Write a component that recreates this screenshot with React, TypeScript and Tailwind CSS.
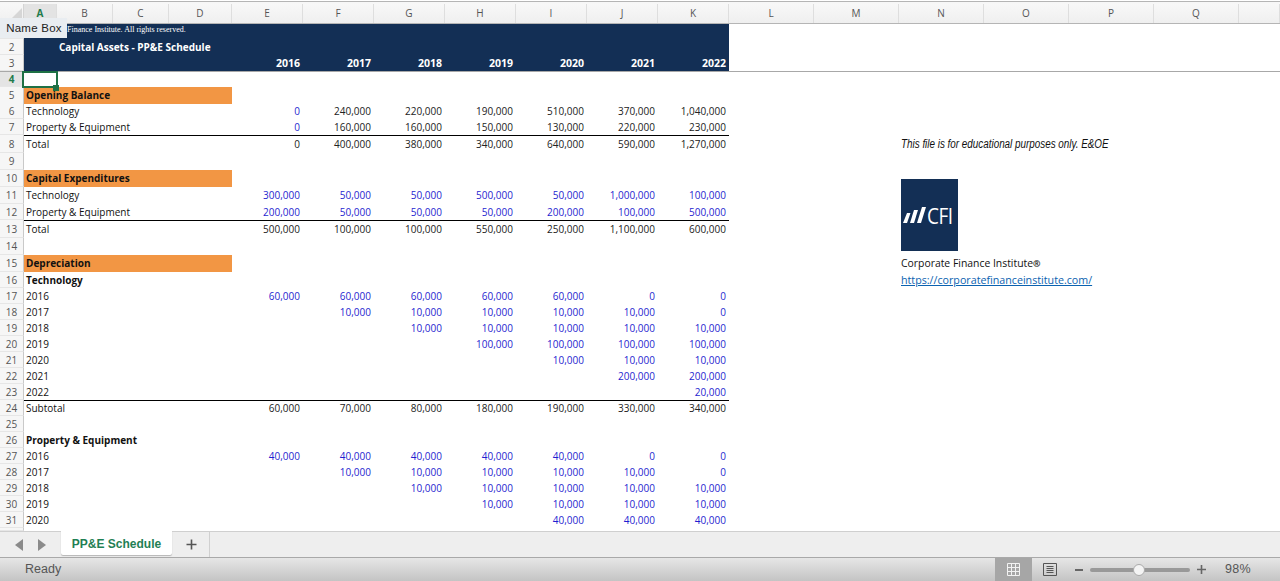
import React from "react";

const COLS = ["A", "B", "C", "D", "E", "F", "G", "H", "I", "J", "K", "L", "M", "N", "O", "P", "Q", ""];
const GRID = "grid grid-cols-[24px_33px_56px_56px_63px_repeat(7,71px)_repeat(6,85px)_41px]";

type Row = {
  n: number;
  h?: string;
  label?: string;
  bold?: boolean;
  orange?: boolean;
  line?: boolean;
  up?: boolean;
  blue?: boolean | number;
  vals?: string[];
};

const T = "10,000";
const rows: Row[] = [
  { n: 4, h: "h-[15px]" },
  { n: 5, label: "Opening Balance", bold: true, orange: true, up: true },
  { n: 6, label: "Technology", vals: ["0", "240,000", "220,000", "190,000", "510,000", "370,000", "1,040,000"], blue: 1 },
  { n: 7, label: "Property & Equipment", vals: ["0", "160,000", "160,000", "150,000", "130,000", "220,000", "230,000"], blue: 1 },
  { n: 8, h: "h-[18px]", label: "Total", line: true, up: true, vals: ["0", "400,000", "380,000", "340,000", "640,000", "590,000", "1,270,000"] },
  { n: 9, h: "h-[17px]" },
  { n: 10, h: "h-[17px]", label: "Capital Expenditures", bold: true, orange: true, up: true },
  { n: 11, h: "h-[17px]", label: "Technology", blue: true, up: true, vals: ["300,000", "50,000", "50,000", "500,000", "50,000", "1,000,000", "100,000"] },
  { n: 12, label: "Property & Equipment", blue: true, vals: ["200,000", "50,000", "50,000", "50,000", "200,000", "100,000", "500,000"] },
  { n: 13, h: "h-[18px]", label: "Total", line: true, up: true, vals: ["500,000", "100,000", "100,000", "550,000", "250,000", "1,100,000", "600,000"] },
  { n: 14, h: "h-[17px]" },
  { n: 15, h: "h-[17px]", label: "Depreciation", bold: true, orange: true, up: true },
  { n: 16, label: "Technology", bold: true },
  { n: 17, label: "2016", blue: true, vals: ["60,000", "60,000", "60,000", "60,000", "60,000", "0", "0"] },
  { n: 18, label: "2017", blue: true, vals: ["", T, T, T, T, T, "0"] },
  { n: 19, label: "2018", blue: true, vals: ["", "", T, T, T, T, T] },
  { n: 20, label: "2019", blue: true, vals: ["", "", "", "100,000", "100,000", "100,000", "100,000"] },
  { n: 21, label: "2020", blue: true, vals: ["", "", "", "", T, T, T] },
  { n: 22, label: "2021", blue: true, vals: ["", "", "", "", "", "200,000", "200,000"] },
  { n: 23, label: "2022", blue: true, vals: ["", "", "", "", "", "", "20,000"] },
  { n: 24, label: "Subtotal", line: true, up: true, vals: ["60,000", "70,000", "80,000", "180,000", "190,000", "330,000", "340,000"] },
  { n: 25 },
  { n: 26, label: "Property & Equipment", bold: true },
  { n: 27, label: "2016", blue: true, vals: ["40,000", "40,000", "40,000", "40,000", "40,000", "0", "0"] },
  { n: 28, label: "2017", blue: true, vals: ["", T, T, T, T, T, "0"] },
  { n: 29, label: "2018", blue: true, vals: ["", "", T, T, T, T, T] },
  { n: 30, label: "2019", blue: true, vals: ["", "", "", T, T, T, T] },
  { n: 31, label: "2020", blue: true, vals: ["", "", "", "", "40,000", "40,000", "40,000"] },
];

const notes: Record<number, React.ReactNode> = {
  8: (
    <span className="inline-block origin-left scale-x-[0.822] font-['Liberation_Sans',sans-serif] text-[12px] italic text-[#111]">
      This file is for educational purposes only. E&amp;OE
    </span>
  ),
  15: (
    <span className="text-[10.4px] text-[#111]">
      Corporate Finance Institute<span className="text-[9px] font-bold">®</span>
    </span>
  ),
  16: <span className="text-[10.7px] text-[#0b62b0] underline">https://corporatefinanceinstitute.com/</span>,
};

function RowHead({ n, active }: { n: number | string; active?: boolean }) {
  return (
    <div className={`flex items-center justify-center border-r border-b border-r-[#c9c9c9] border-b-[#e6e6e6] text-[10px] ${active ? "bg-[#e4e4e4] font-bold text-[#1f7a4c]" : "bg-[#f6f6f6] text-[#555]"}`}>
      {n}
    </div>
  );
}

function SheetRow({ r }: { r: Row }) {
  const top = r.line ? "border-t border-black" : "";
  const up = r.up ? "pb-[2px]" : "";
  return (
    <div className={`${GRID} ${r.h ?? "h-4"}`}>
      <RowHead n={r.n} active={r.n === 4} />
      <div className={`col-span-4 flex items-center pl-[2px] whitespace-nowrap ${top} ${up} ${r.orange ? "bg-[#f29644]" : ""} ${r.n === 5 ? "h-[17px] self-start" : ""} ${r.bold ? "font-bold" : ""} text-[#111]`}>
        {r.label}
      </div>
      {Array.from({ length: 7 }).map((_, i) => {
        const blue = r.blue === true || (r.blue === 1 && i === 0);
        return (
          <div key={i} className={`flex items-center justify-end pr-[3px] ${top} ${up} ${blue ? "text-[#1f1fd0]" : "text-[#222]"}`}>
            {r.vals?.[i] ?? ""}
          </div>
        );
      })}
      <div className="col-span-2" />
      <div className="flex items-center pl-[2px] whitespace-nowrap">{notes[r.n]}</div>
    </div>
  );
}

function BannerRow({ n, children, years, h }: { n: number | string; children?: React.ReactNode; years?: boolean; h: string }) {
  const ys = ["2016", "2017", "2018", "2019", "2020", "2021", "2022"];
  return (
    <div className={`${GRID} ${h}`}>
      <RowHead n={n} />
      <div className="col-span-4 flex items-center whitespace-nowrap bg-[#132f55] text-white">{children}</div>
      {ys.map((y) => (
        <div key={y} className="flex items-center justify-end bg-[#132f55] pr-[3px] text-[10.5px] font-bold text-white">
          {years ? y : ""}
        </div>
      ))}
    </div>
  );
}

function Logo() {
  return (
    <div className="absolute left-[901px] top-[179px] flex h-[72px] w-[57px] items-center gap-[1px] bg-[#132f55] pl-[2px]">
      <svg width="23" height="16" viewBox="0 0 23 16" fill="#fff">
        <polygon points="0,16 4,16 7.5,6 4,6" />
        <polygon points="7,16 11,16 15,3 11,3" />
        <polygon points="14,16 18,16 23,0 19,0" />
      </svg>
      <span className="inline-block w-[28px] origin-left scale-x-[0.86] font-['Open_Sans',sans-serif] text-[22px] font-normal leading-none tracking-[-0.5px] text-white">
        CFI
      </span>
    </div>
  );
}

export default function App() {
  return (
    <div className="relative flex h-[581px] w-[1280px] flex-col overflow-hidden bg-white font-['Open_Sans',sans-serif] text-[10px] leading-none">
      <div className="mt-px h-[3px] shrink-0 border-t border-t-[#b5b5b5] bg-[#f7f7f7]" />
      <div className={`${GRID} h-5 shrink-0 border-b border-[#b5b5b5] bg-gradient-to-b from-[#f8f8f8] to-[#efefef]`}>
        <div className="relative flex items-end justify-start border-r border-[#d4d4d4]">
          <div className="absolute bottom-px right-px h-0 w-0 border-b-[14px] border-l-[14px] border-b-[#d6d6d6] border-l-transparent" />
        </div>
        {COLS.map((c, i) => (
          <div key={i} className={`flex items-center justify-center border-r border-[#dedede] pb-[2px] text-[10px] ${c === "A" ? "bg-[#e3e3e3] font-bold text-[#1f7a4c]" : "text-[#555]"}`}>
            {c}
          </div>
        ))}
      </div>
      <div className="shrink-0 border-b border-[#a8a8a8]">
        <BannerRow n="" h="h-[15px]">
          <span className="mb-[3px] pl-[1px] font-['Liberation_Serif',serif] text-[8px]">© Corporate Finance Institute. All rights reserved.</span>
        </BannerRow>
        <BannerRow n={2} h="h-4">
          <span className="pl-[35px] text-[10px] font-bold">Capital Assets - PP&amp;E Schedule</span>
        </BannerRow>
        <BannerRow n={3} h="h-4" years />
      </div>
      <div className="min-h-0 flex-1 overflow-hidden">
        {rows.map((r) => (
          <SheetRow key={r.n} r={r} />
        ))}
        <div className={`${GRID} h-[3px]`}>
          <RowHead n="" />
        </div>
      </div>
      <Logo />

      <div className="absolute left-[22px] top-[71px] h-[17px] w-[36px] border-2 border-[#1e7145]" />
      <div className="absolute left-[53px] top-[85px] h-[6px] w-[6px] bg-[#1e7145]" />
      <div className="absolute left-0 top-[18px] flex h-5 w-[67px] items-center justify-center bg-[#e9edf1] pl-px pt-[2px] font-['Liberation_Sans',sans-serif] text-[11.5px] tracking-[0.25px] text-[#222]">
        Name Box
      </div>

      <div className="flex h-[26px] shrink-0 items-stretch border-t border-[#cfcfcf] bg-[#eeeeee]">
        <div className="flex w-[61px] items-center gap-[15px] pl-[15px]">
          <svg width="8" height="12" viewBox="0 0 8 12" fill="#8a8a8a"><polygon points="8,0 8,12 0,6" /></svg>
          <svg width="8" height="12" viewBox="0 0 8 12" fill="#8a8a8a"><polygon points="0,0 0,12 8,6" /></svg>
        </div>
        <div className="-mt-px mb-[2px] flex w-[111px] items-center justify-center rounded-b-[2px] bg-white pt-[2px] font-['Liberation_Sans',sans-serif] text-[12px] font-bold text-[#1f8054] shadow-[0_1px_1px_#b5b5b5]">
          PP&amp;E Schedule
        </div>
        <div className="flex w-[38px] items-center justify-center border-r border-[#d0d0d0] pl-[2px]">
          <svg width="11" height="11" viewBox="0 0 11 11" stroke="#555" strokeWidth="1.6"><path d="M5.5 0.5v10M0.5 5.5h10" /></svg>
        </div>
      </div>

      <div className="flex h-6 shrink-0 items-center border-t border-[#a9a9a9] bg-gradient-to-b from-[#e6e6e6] to-[#c4c4c4] text-[#555]">
        <span className="pl-[25px] font-['Liberation_Sans',sans-serif] text-[12.5px]">Ready</span>
        <div className="ml-auto flex h-full items-center">
          <div className="flex h-full w-[37px] items-center justify-center bg-[#a6a6a6]">
            <svg width="13" height="13" viewBox="0 0 13 13" fill="none" stroke="#f2f2f2" strokeWidth="1"><path d="M.5.5h12v12H.5zM4.5.5v12M8.5.5v12M.5 4.5h12M.5 8.5h12" /></svg>
          </div>
          <div className="flex w-[36px] items-center justify-center">
            <svg width="14" height="13" viewBox="0 0 14 13" fill="none" stroke="#555" strokeWidth="1"><path d="M.5.5h13v12H.5zM3.5 3.5h7M3.5 5.5h7M3.5 7.5h7M3.5 9.5h7" /></svg>
          </div>
          <div className="ml-[7px] h-[2px] w-[8px] bg-[#666]" />
          <div className="relative ml-[7px] h-[4px] w-[100px] rounded-full bg-[#999]">
            <div className="absolute left-[43px] top-[-4px] h-[12px] w-[12px] rounded-full border border-[#aaa] bg-[#f4f4f4]" />
          </div>
          <svg className="ml-[7px]" width="9" height="9" viewBox="0 0 9 9" stroke="#666" strokeWidth="1.6"><path d="M4.5 0v9M0 4.5h9" /></svg>
          <span className="ml-[19px] mr-[29px] font-['Liberation_Sans',sans-serif] text-[12.5px] tracking-[0.3px]">98%</span>
        </div>
      </div>
    </div>
  );
}
